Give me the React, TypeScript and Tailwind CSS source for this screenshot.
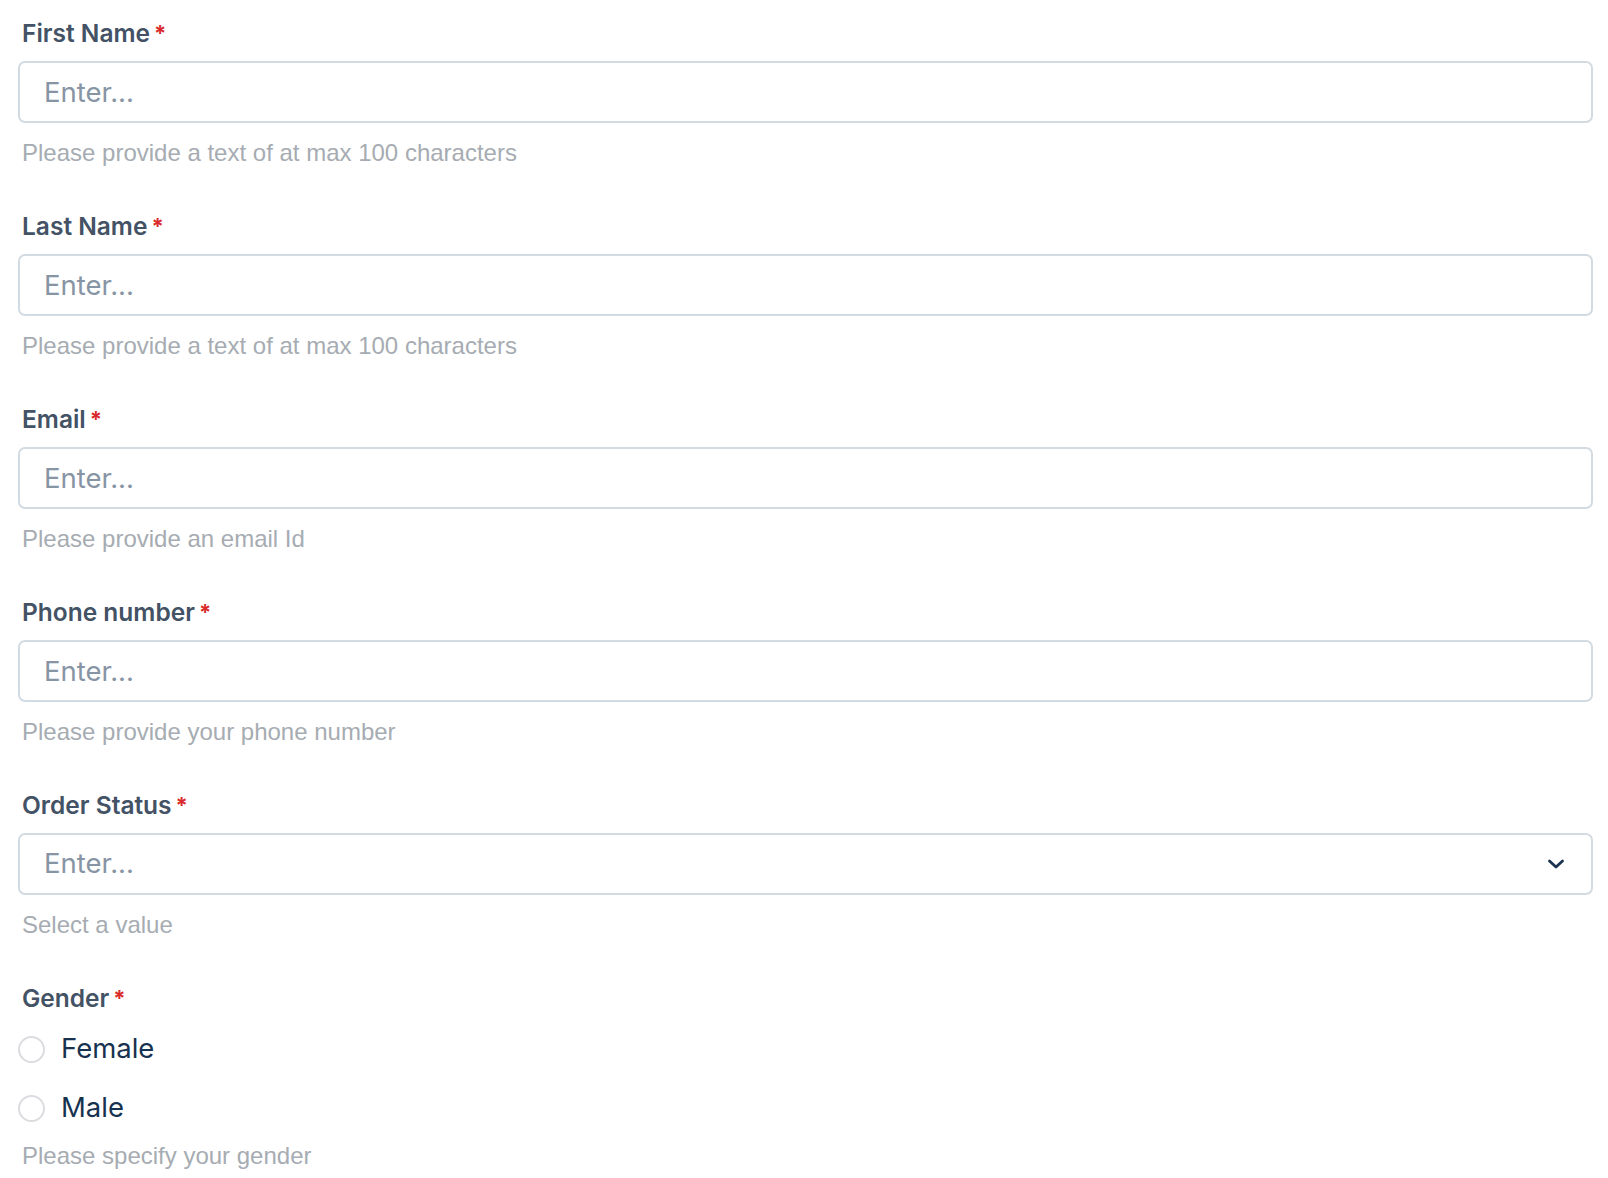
import React from "react";

const labelCls =
  "flex items-center h-[28px] text-[24.5px] font-semibold text-[#435264] leading-[28px] pl-[4px]";
const helperCls =
  "h-[28px] leading-[28px] text-[24px] text-[#a6acb2] pl-[4px]";

function Label({ text }: { text: string }) {
  return (
    <div className={labelCls} style={{ fontFamily: "Inter, sans-serif" }}>
      <span>{text}</span>
      <span className="ml-[4px] text-[#d92b2b] text-[22px] font-bold">*</span>
    </div>
  );
}

function Helper({ text }: { text: string }) {
  return (
    <div className={helperCls} style={{ fontFamily: "'Liberation Sans', Arial, sans-serif" }}>
      {text}
    </div>
  );
}

function TextField({ label, helper }: { label: string; helper: string }) {
  return (
    <div className="flex flex-col">
      <Label text={label} />
      <input
        className="mt-[14px] h-[62px] w-full rounded-[7px] border-[2px] border-[#d3dbe2] bg-white px-[24px] text-[27.5px] text-[#1d3653] placeholder:text-[#8794a4] outline-none"
        style={{ fontFamily: "Inter, sans-serif" }}
        placeholder="Enter..."
      />
      <div className="mt-[16px]">
        <Helper text={helper} />
      </div>
    </div>
  );
}

function SelectField({ label, helper }: { label: string; helper: string }) {
  return (
    <div className="flex flex-col">
      <Label text={label} />
      <div
        className="mt-[14px] h-[62px] w-full rounded-[7px] border-[2px] border-[#d3dbe2] bg-white pl-[24px] pr-[26px] flex items-center justify-between"
        style={{ fontFamily: "Inter, sans-serif" }}
      >
        <span className="text-[27.5px] text-[#8794a4]">Enter...</span>
        <svg width="18" height="12" viewBox="0 0 18 12" fill="none">
          <path
            d="M2.5 3L9 9L15.5 3"
            stroke="#1a3350"
            strokeWidth="2.8"
            strokeLinecap="round"
            strokeLinejoin="round"
          />
        </svg>
      </div>
      <div className="mt-[16px]">
        <Helper text={helper} />
      </div>
    </div>
  );
}

function Radio({ text }: { text: string }) {
  return (
    <label className="flex items-center h-[44px] cursor-pointer">
      <span className="w-[27px] h-[27px] rounded-full border-[2px] border-[#dadcdf] bg-white" />
      <span
        className="ml-[16px] text-[27.5px] text-[#16324f]"
        style={{ fontFamily: "Inter, sans-serif" }}
      >
        {text}
      </span>
    </label>
  );
}

export default function App() {
  return (
    <div className="bg-white min-h-[1178px] w-full pl-[18px] pr-[15px] pt-[19px]">
      <div className="flex flex-col gap-[45px]">
        <TextField label="First Name" helper="Please provide a text of at max 100 characters" />
        <TextField label="Last Name" helper="Please provide a text of at max 100 characters" />
        <TextField label="Email" helper="Please provide an email Id" />
        <TextField label="Phone number" helper="Please provide your phone number" />
        <SelectField label="Order Status" helper="Select a value" />
        <div className="flex flex-col">
          <Label text="Gender" />
          <div className="mt-[15px] flex flex-col gap-[15px] pl-[0px]">
            <Radio text="Female" />
            <Radio text="Male" />
          </div>
          <div className="mt-[12px]">
            <Helper text="Please specify your gender" />
          </div>
        </div>
      </div>
    </div>
  );
}
